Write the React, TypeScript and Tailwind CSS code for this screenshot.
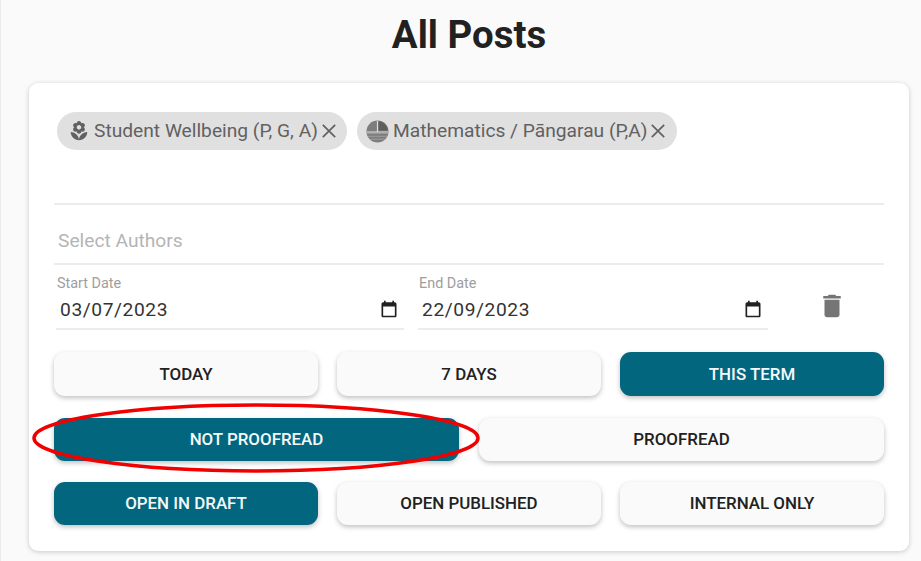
const filterBtn = 'flex items-center justify-center rounded-[11px] text-[16.9px] font-medium leading-none shadow-[0_2px_5px_rgba(0,0,0,0.25)]'
const onBtn = 'bg-[#02667f] text-[#f5f9fa]'
const offBtn = 'bg-[#fafafa] text-[#212121]'

function CloseIcon() {
  return (
    <svg width="18" height="18" viewBox="0 0 16 16" className="shrink-0" fill="none" stroke="#616161" strokeWidth="1.5">
      <path d="M2.5 2.5l11 11M13.5 2.5l-11 11" />
    </svg>
  )
}

function CalendarIcon() {
  return (
    <svg width="20" height="20" viewBox="0 0 24 24" className="-mt-[3px] shrink-0" fill="#212121">
      <path d="M19 4h-1V2h-2v2H8V2H6v2H5c-1.1 0-2 .9-2 2v14c0 1.1.9 2 2 2h14c1.1 0 2-.9 2-2V6c0-1.1-.9-2-2-2zm0 16H5V9h14v11z" />
    </svg>
  )
}

function DateField({ label, value, className }: { label: string; value: string; className: string }) {
  return (
    <div className={className}>
      <p className="pl-[1px] text-[14.4px] leading-[16px] text-[#9e9e9e]">{label}</p>
      <div className="mt-[4px] flex h-[34px] items-center justify-between border-b-2 border-[#ececec] pb-[3px] pl-[4px] pr-[5px]">
        <span className="text-[19.2px] tracking-[0.6px] text-[#333]">{value}</span>
        <CalendarIcon />
      </div>
    </div>
  )
}

export default function App() {
  return (
    <div className="relative h-[561px] w-[921px] overflow-hidden border-l border-[#ececec] bg-[#fafafa] pl-[28px] pr-[12px] font-[Roboto,sans-serif]">
      <h1 className="pt-[13px] text-center text-[38.4px] font-bold leading-[43px] text-[#212121]">All Posts</h1>

      <div className="mt-[27px] h-[468px] rounded-[9px] bg-white px-[25px] pt-[29px] shadow-[0_1px_5px_rgba(0,0,0,0.2)]">
        <div className="flex h-[93px] gap-[10px] border-b-2 border-[#ececec] pl-[3px]">
          <div className="flex h-[38px] w-[290px] items-center rounded-full bg-[#e0e0e0] pl-[11px] text-[19.2px] text-[#616161]">
            <svg width="22" height="22" viewBox="0 0 24 24" className="mr-[4px] shrink-0" fill="#616161">
              <path d="M12 22c4.97 0 9-4.03 9-9-4.97 0-9 4.03-9 9zM5.6 10.25c0 1.38 1.12 2.5 2.5 2.5.53 0 1.01-.16 1.42-.44l-.02.19c0 1.38 1.12 2.5 2.5 2.5s2.5-1.12 2.5-2.5l-.02-.19c.4.28.89.44 1.42.44 1.38 0 2.5-1.12 2.5-2.5 0-1-.59-1.85-1.43-2.25.84-.4 1.43-1.25 1.43-2.25 0-1.38-1.12-2.5-2.5-2.5-.53 0-1.01.16-1.42.44l.02-.19C14.5 2.12 13.38 1 12 1S9.5 2.12 9.5 3.5l.02.19c-.4-.28-.89-.44-1.42-.44-1.38 0-2.5 1.12-2.5 2.5 0 1 .59 1.85 1.43 2.25-.84.4-1.43 1.25-1.43 2.25zM12 5.5c1.38 0 2.5 1.12 2.5 2.5s-1.12 2.5-2.5 2.5S9.5 9.38 9.5 8s1.12-2.5 2.5-2.5zM3 13c0 4.97 4.03 9 9 9 0-4.97-4.03-9-9-9z" />
            </svg>
            <span className="whitespace-nowrap">Student Wellbeing (P, G, A)</span>
            <span className="ml-[2px]"><CloseIcon /></span>
          </div>
          <div className="flex h-[38px] w-[320px] items-center rounded-full bg-[#e0e0e0] pl-[9px] text-[19.2px] text-[#616161]">
            <svg width="23" height="23" viewBox="0 0 24 24" className="mr-[4px] shrink-0">
              <circle cx="12" cy="12" r="11.5" fill="#7d7d7d" />
              <path d="M13 1a11 11 0 0 1 10 10H13z" fill="#5f5f5f" />
              <path d="M1 14h22M2 17h20M4 20h16" stroke="#a0a0a0" strokeWidth="1" />
              <path d="M12 1v11.5H1M12 12.5h11" stroke="#e0e0e0" strokeWidth="1.2" fill="none" />
            </svg>
            <span className="whitespace-nowrap">Mathematics / Pāngarau (P,A)</span>
            <span className="ml-[1px]"><CloseIcon /></span>
          </div>
        </div>

        <div className="flex h-[60px] items-center border-b-2 border-[#ececec] pl-[4px] pt-[14px] text-[19.2px] text-[#b5b5b5]">Select Authors</div>

        <div className="mt-[11px] flex items-start">
          <DateField label="Start Date" value="03/07/2023" className="ml-[2px] w-[348px]" />
          <DateField label="End Date" value="22/09/2023" className="ml-[14px] w-[350px]" />
          <svg width="30" height="30" viewBox="0 0 24 24" className="ml-[49px] mt-[15px] shrink-0" fill="#757575">
            <path d="M6 19c0 1.1.9 2 2 2h8c1.1 0 2-.9 2-2V7H6v12zM19 4h-3.5l-1-1h-5l-1 1H5v2h14V4z" />
          </svg>
        </div>

        <div className="mt-[22px] grid grid-cols-3 gap-x-[19px]">
          <button className={`h-[44px] ${filterBtn} ${offBtn}`}>TODAY</button>
          <button className={`h-[44px] ${filterBtn} ${offBtn}`}>7 DAYS</button>
          <button className={`h-[44px] ${filterBtn} ${onBtn}`}>THIS TERM</button>
        </div>
        <div className="mt-[22px] grid grid-cols-2 gap-x-[20px]">
          <button className={`h-[43px] ${filterBtn} ${onBtn}`}>NOT PROOFREAD</button>
          <button className={`h-[43px] ${filterBtn} ${offBtn}`}>PROOFREAD</button>
        </div>
        <div className="mt-[21px] grid grid-cols-3 gap-x-[19px]">
          <button className={`h-[43px] ${filterBtn} ${onBtn}`}>OPEN IN DRAFT</button>
          <button className={`h-[43px] ${filterBtn} ${offBtn}`}>OPEN PUBLISHED</button>
          <button className={`h-[43px] ${filterBtn} ${offBtn}`}>INTERNAL ONLY</button>
        </div>
      </div>

      <svg width="460" height="76" viewBox="0 0 460 76" className="pointer-events-none absolute left-[25px] top-[400px]" fill="none">
        <ellipse cx="230" cy="38" rx="222" ry="33" stroke="#f00000" strokeWidth="3.5" />
      </svg>
    </div>
  )
}
